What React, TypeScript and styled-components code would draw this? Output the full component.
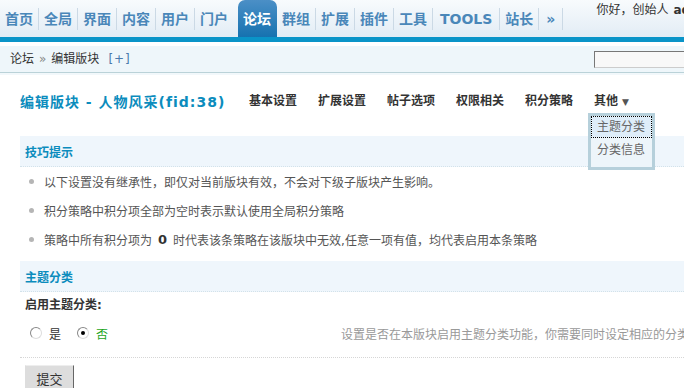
import React from "react";
import styled, { createGlobalStyle } from "styled-components";

const GlobalStyle = createGlobalStyle`
  html, body {
    margin: 0;
    padding: 0;
    overflow: hidden;
    background: #fff;
  }
  body {
    font-family: "DejaVu Sans", "Noto Sans CJK SC", sans-serif;
    font-size: 12px;
    color: #333;
  }
`;

const Page = styled.div`
  width: 780px;
`;

const Header = styled.div`
  display: flex;
  height: 37px;
  background: linear-gradient(#f8fbfd, #e2ecf5);
  border-bottom: 5px solid #0a94c8;
`;

const Nav = styled.div`
  display: flex;
  align-items: stretch;
`;

const NavItem = styled.a<{ $active?: boolean; $wide?: boolean }>`
  display: flex;
  align-items: center;
  font-size: 14px;
  font-weight: bold;
  line-height: 16px;
  color: ${(p) => (p.$active ? "#fff" : "#4a87b9")};
  background: ${(p) =>
    p.$active ? "linear-gradient(#4b8fc6, #1672b0)" : "transparent"};
  border-radius: ${(p) => (p.$active ? "7px 7px 0 0" : "0")};
  margin: ${(p) => (p.$active ? "0 0 0 5px" : "0")};
  padding: ${(p) => (p.$active ? "0 6px 0 5px" : p.$wide ? "0 7px" : "0 5px")};
  white-space: nowrap;
`;

const Sep = styled.span`
  width: 1px;
  height: 22px;
  align-self: center;
  background: #cbd9e5;
`;

const Greeting = styled.div`
  margin-left: 33px;
  padding-top: 3px;
  line-height: 14px;
  white-space: nowrap;
  color: #333;

  b {
    font-family: "DejaVu Sans", sans-serif;
    margin-left: 5px;
  }
`;

const Crumbs = styled.div`
  display: flex;
  align-items: center;
  height: 26px;
  margin-top: 4px;
  padding-left: 10px;
  background: #eef6fa;
  border-bottom: 1px solid #bad2d8;
  box-shadow: 0 2px 0 #f2f8fb;
`;

const CrumbText = styled.span`
  color: #333;
  line-height: 14px;
`;

const CrumbArrow = styled.span`
  color: #888;
  margin: 0 5px;
`;

const CrumbAdd = styled.span`
  color: #4a79ab;
  margin-left: 9px;
  letter-spacing: 1px;
`;

const Search = styled.input`
  width: 150px;
  height: 15px;
  margin: 0 34px 0 auto;
  border: 1px solid #ccc;
  border-top-color: #777;
  border-left-color: #777;
  background: #f8f8f8;
  padding: 0;
`;

const Main = styled.div`
  padding-left: 20px;
`;

const TitleRow = styled.div`
  display: grid;
  grid-template-columns: 229px auto;
  align-items: center;
  padding-top: 20px;
  margin-bottom: 26px;
  line-height: 16px;
`;

const Title = styled.h3`
  margin: 0;
  font-size: 14px;
  font-weight: bold;
  letter-spacing: 1px;
  color: #0b8cbd;
  white-space: nowrap;
`;

const Tabs = styled.div`
  display: flex;
  gap: 21px;
`;

const Tab = styled.span`
  position: relative;
  font-weight: bold;
  font-size: 12px;
  color: #333;
  white-space: nowrap;
`;

const Caret = styled.span`
  font-size: 9px;
  color: #555;
  margin-left: 4px;
`;

const Dropdown = styled.div`
  position: absolute;
  top: calc(100% + 3px);
  left: -6px;
  width: 61px;
  padding: 1px 0 4px;
  border: 3px solid #b6d0db;
  background: #edf5fa;
  z-index: 2;
`;

const DropItem = styled.div<{ $focus?: boolean }>`
  height: 20px;
  line-height: 20px;
  padding-left: 5px;
  margin: 0 1px 3px;
  font-weight: normal;
  color: #666;
  background: ${(p) => (p.$focus ? "#deedf9" : "transparent")};
  outline: ${(p) => (p.$focus ? "1px dotted #000" : "none")};
`;

const Band = styled.div`
  display: flex;
  align-items: center;
  height: 30px;
  padding-left: 5px;
  background: #eff6fc;
  border-bottom: 1px dotted #d3e2ea;
  font-weight: bold;
  color: #0b8cbd;
`;

const Tips = styled.ul`
  list-style: none;
  margin: 0 0 7px;
  padding: 0;
`;

const Tip = styled.li`
  display: flex;
  align-items: center;
  height: 29px;
  padding-left: 9px;
  color: #555;
  white-space: nowrap;

  &::before {
    content: "";
    width: 5px;
    height: 5px;
    border-radius: 50%;
    background: #b5b5b5;
    margin-right: 10px;
  }

  b {
    font-family: "DejaVu Sans", sans-serif;
    font-size: 13px;
    color: #333;
    margin: 0 6px;
  }
`;

const FieldLabel = styled.div`
  height: 26px;
  line-height: 26px;
  padding-left: 5px;
  font-weight: bold;
  color: #333;
`;

const RadioRow = styled.div`
  display: grid;
  grid-template-columns: 321px auto;
  align-items: center;
  height: 30px;
`;

const Choices = styled.div`
  display: flex;
  align-items: center;
  padding-left: 10px;
`;

const Choice = styled.label<{ $on?: boolean }>`
  display: flex;
  align-items: center;
  gap: 7px;
  margin-right: 16px;
  color: ${(p) => (p.$on ? "#1ca51c" : "#333")};
`;

const Radio = styled.span<{ $on?: boolean }>`
  position: relative;
  width: 10px;
  height: 10px;
  border-radius: 50%;
  border: 1px solid #ddd;
  border-top-color: #888;
  border-left-color: #888;
  background: #fff;

  &::after {
    content: "";
    display: ${(p) => (p.$on ? "block" : "none")};
    position: absolute;
    left: 3px;
    top: 3px;
    width: 4px;
    height: 4px;
    border-radius: 50%;
    background: #000;
  }
`;

const Hint = styled.span`
  color: #999;
  white-space: nowrap;
`;

const Divider = styled.div`
  margin-top: 9px;
  border-top: 1px dotted #d6d6d6;
`;

const Submit = styled.button`
  margin: 7px 0 0 5px;
  width: 49px;
  height: 26px;
  padding: 0;
  font-family: "Noto Sans CJK SC", sans-serif;
  font-size: 13px;
  color: #333;
  background: #ddd;
  border: 1px solid #ddd;
  border-right-color: #666;
  border-top-color: #eee;
`;

const navItems = ["首页", "全局", "界面", "内容", "用户", "门户"];
const navAfter = ["群组", "扩展", "插件", "工具", "TOOLS", "站长", "»"];
const tabs = ["基本设置", "扩展设置", "帖子选项", "权限相关", "积分策略"];

export default function App() {
  return (
    <Page>
      <GlobalStyle />
      <Header>
        <Nav>
          {navItems.map((n, i) => (
            <React.Fragment key={n}>
              <NavItem>{n}</NavItem>
              {i < navItems.length - 1 && <Sep />}
            </React.Fragment>
          ))}
          <NavItem $active>论坛</NavItem>
          {navAfter.map((n) => (
            <React.Fragment key={n}>
              <NavItem $wide={n === "TOOLS" || n === "»"}>{n}</NavItem>
              <Sep />
            </React.Fragment>
          ))}
        </Nav>
        <Greeting>
          你好，创始人<b>admin</b>
        </Greeting>
      </Header>

      <Crumbs>
        <CrumbText>论坛</CrumbText>
        <CrumbArrow>»</CrumbArrow>
        <CrumbText>编辑版块</CrumbText>
        <CrumbAdd>[+]</CrumbAdd>
        <Search />
      </Crumbs>

      <Main>
        <TitleRow>
          <Title>编辑版块 - 人物风采(fid:38)</Title>
          <Tabs>
            {tabs.map((t) => (
              <Tab key={t}>{t}</Tab>
            ))}
            <Tab>
              其他<Caret>▼</Caret>
              <Dropdown>
                <DropItem $focus>主题分类</DropItem>
                <DropItem>分类信息</DropItem>
              </Dropdown>
            </Tab>
          </Tabs>
        </TitleRow>

        <Band>技巧提示</Band>
        <Tips>
          <Tip>以下设置没有继承性，即仅对当前版块有效，不会对下级子版块产生影响。</Tip>
          <Tip>积分策略中积分项全部为空时表示默认使用全局积分策略</Tip>
          <Tip>
            策略中所有积分项为<b>0</b>时代表该条策略在该版块中无效,任意一项有值，均代表启用本条策略
          </Tip>
        </Tips>

        <Band>主题分类</Band>
        <FieldLabel>启用主题分类:</FieldLabel>
        <RadioRow>
          <Choices>
            <Choice>
              <Radio />是
            </Choice>
            <Choice $on>
              <Radio $on />否
            </Choice>
          </Choices>
          <Hint>设置是否在本版块启用主题分类功能，你需要同时设定相应的分类才能使用此功能</Hint>
        </RadioRow>
        <Divider />
        <Submit>提交</Submit>
      </Main>
    </Page>
  );
}
